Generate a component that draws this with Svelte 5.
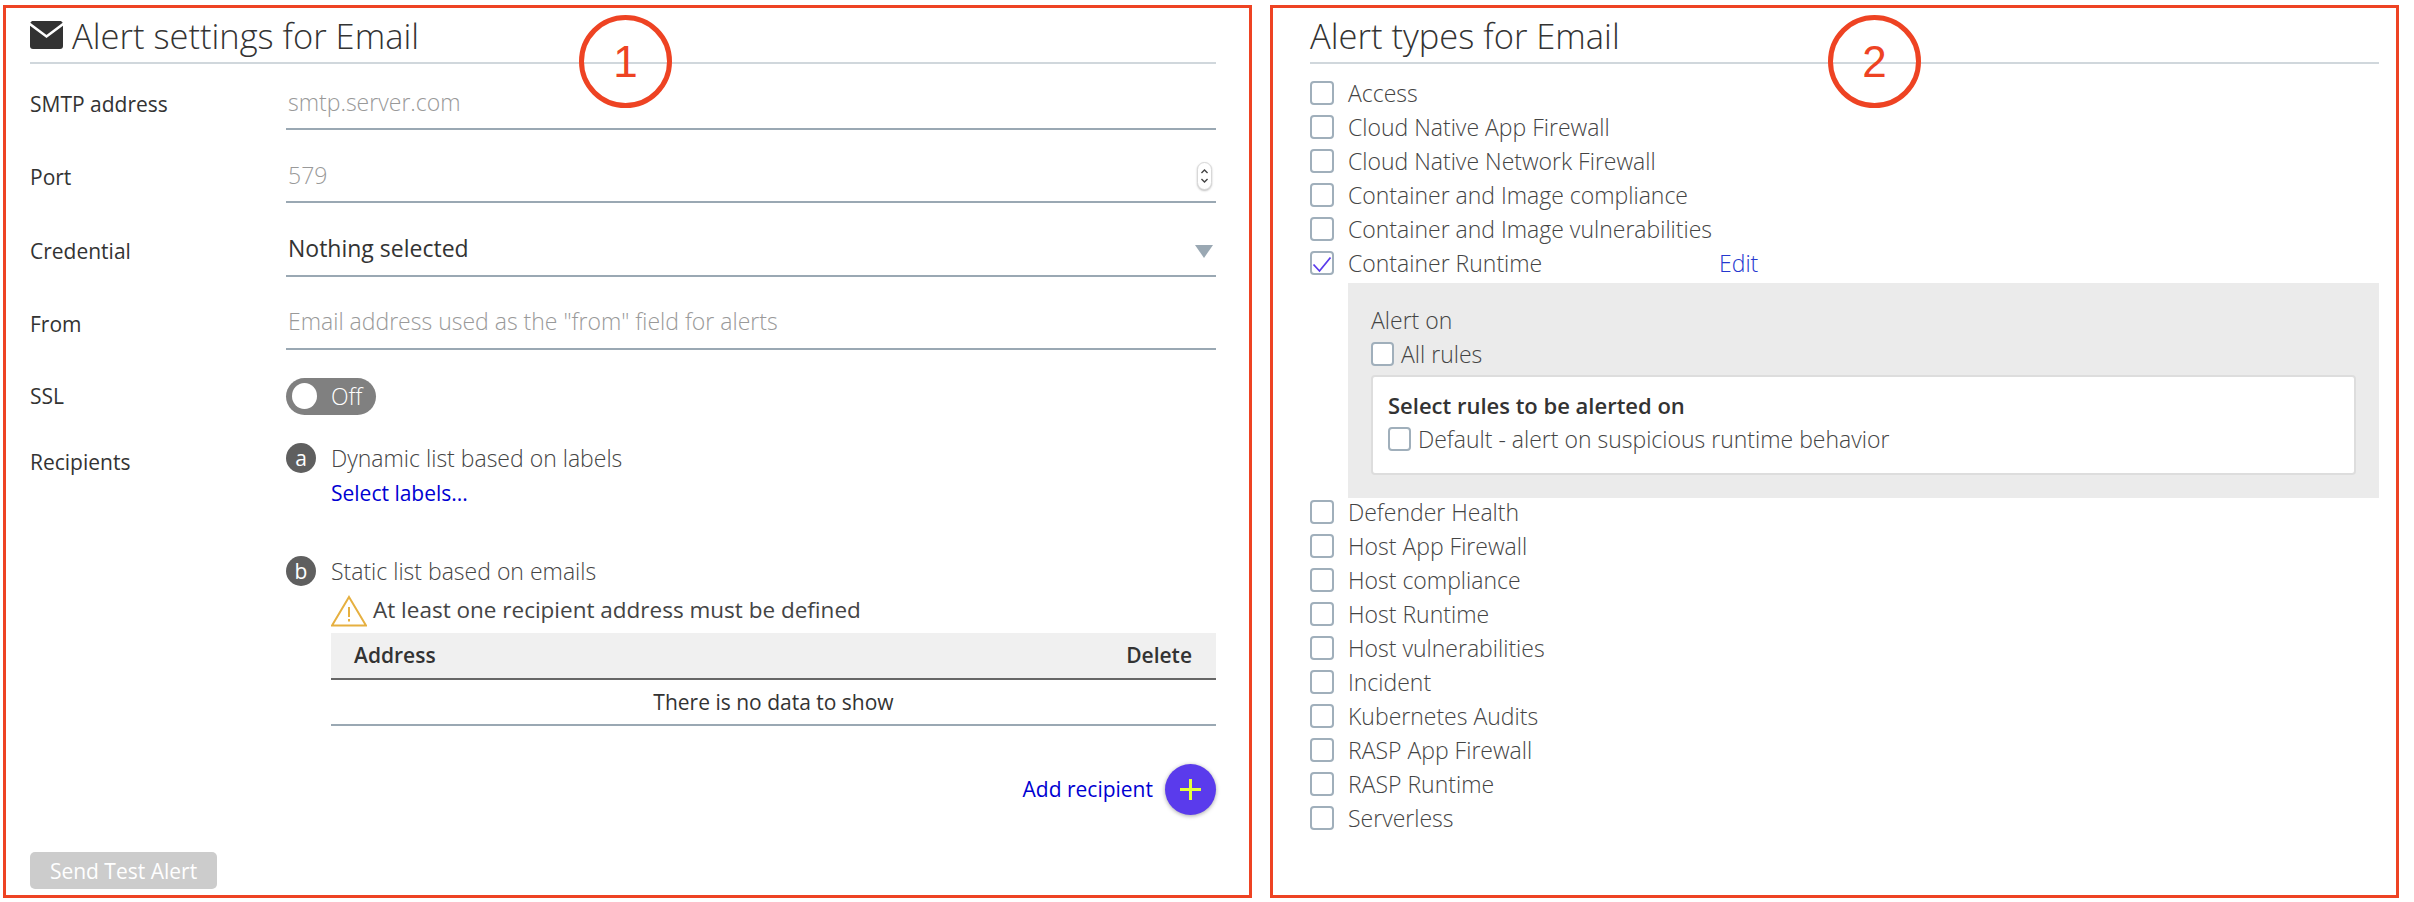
<script lang="ts">
  const typesBefore = [
    "Access",
    "Cloud Native App Firewall",
    "Cloud Native Network Firewall",
    "Container and Image compliance",
    "Container and Image vulnerabilities",
  ];
  const typesAfter = [
    "Defender Health",
    "Host App Firewall",
    "Host compliance",
    "Host Runtime",
    "Host vulnerabilities",
    "Incident",
    "Kubernetes Audits",
    "RASP App Firewall",
    "RASP Runtime",
    "Serverless",
  ];
</script>

<div class="page">
  <section class="panel left">
    <span class="callout one">1</span>
    <h2 class="title">
      <svg class="mail" viewBox="0 0 33 28" aria-hidden="true">
        <path d="M2 0h29l2 2v23a3 3 0 0 1-3 3H3a3 3 0 0 1-3-3V2z" fill="#333" />
        <path d="M-1 2.500 16.500 15.500 34 2.500" fill="none" stroke="#fff" stroke-width="2.600" />
      </svg>
      Alert settings for Email
    </h2>

    <div class="field">
      <span class="label">SMTP address</span>
      <div class="control"><span class="hint">smtp.server.com</span></div>
    </div>
    <div class="field">
      <span class="label">Port</span>
      <div class="control">
        <span class="hint">579</span>
        <span class="stepper">
          <svg viewBox="0 0 15 28" aria-hidden="true">
            <path d="M4 10.500l3.500-3.500 3.500 3.500M4 17.500l3.500 3.500 3.500-3.500" fill="none" stroke="#444" stroke-width="1.600" />
          </svg>
        </span>
      </div>
    </div>
    <div class="field">
      <span class="label">Credential</span>
      <div class="control">
        <span class="value">Nothing selected</span>
        <span class="caret"></span>
      </div>
    </div>
    <div class="field">
      <span class="label">From</span>
      <div class="control"><span class="hint">Email address used as the "from" field for alerts</span></div>
    </div>
    <div class="field ssl">
      <span class="label">SSL</span>
      <span class="toggle"><span class="knob"></span>Off</span>
    </div>

    <div class="recipients">
      <span class="label">Recipients</span>
      <div class="lists">
        <div class="list-head"><span class="badge">a</span>Dynamic list based on labels</div>
        <a class="link select" href="#labels">Select labels...</a>

        <div class="list-head static"><span class="badge">b</span>Static list based on emails</div>
        <div class="warning">
          <svg viewBox="0 0 36 32" aria-hidden="true">
            <path d="M18 2 35 30.500H1z" fill="none" stroke="#e6b040" stroke-width="2" />
            <path d="M18 12v10M18 24v2.500" fill="none" stroke="#e6b040" stroke-width="2" />
          </svg>
          <span class="warning-text">At least one recipient address must be defined</span>
        </div>
        <div class="table-head"><span>Address</span><span>Delete</span></div>
        <div class="table-empty">There is no data to show</div>
        <div class="add">
          <a class="link" href="#add">Add recipient</a>
          <button class="plus" aria-label="Add recipient">
            <svg viewBox="0 0 21 21" aria-hidden="true"><path d="M10.500 0v21M0 10.500h21" stroke="#e4ff3a" stroke-width="3" /></svg>
          </button>
        </div>
      </div>
    </div>

    <button class="send">Send Test Alert</button>
  </section>

  <section class="panel right">
    <span class="callout two">2</span>
    <h2 class="title">Alert types for Email</h2>
    <div class="types">
      {#each typesBefore as t}
        <div class="type"><span class="box"></span>{t}</div>
      {/each}
      <div class="type">
        <span class="box">
          <svg viewBox="0 0 20 20" aria-hidden="true"><path d="M1.500 11.500 7.500 18 18.500 4.500" fill="none" stroke="#5a3bec" stroke-width="1.800" /></svg>
        </span>
        <span class="type-name">Container Runtime</span>
        <a class="edit" href="#edit">Edit</a>
      </div>
      <div class="expanded">
        <div class="alert-on">Alert on</div>
        <div class="check"><span class="box small"></span>All rules</div>
        <div class="rules">
          <div class="rules-title">Select rules to be alerted on</div>
          <div class="check"><span class="box small"></span>Default - alert on suspicious runtime behavior</div>
        </div>
      </div>
      {#each typesAfter as t}
        <div class="type"><span class="box"></span>{t}</div>
      {/each}
    </div>
  </section>
</div>

<style>
  :global(body) {
    margin: 0;
    background: #fff;
  }

  .page {
    display: flex;
    gap: 18px;
    width: 2414px;
    height: 902px;
    padding: 5px 0 0 3px;
    box-sizing: border-box;
    font-family: "Open Sans", "Liberation Sans", sans-serif;
    font-size: 23px;
    font-weight: 300;
    color: #444;
  }

  .panel {
    position: relative;
    height: 893px;
    box-sizing: border-box;
    border: 3px solid #ee4323;
  }

  .panel.left {
    width: 1249px;
    padding: 0 33px 0 24px;
  }

  .panel.right {
    width: 1129px;
    padding: 0 17px 0 37px;
  }

  .callout {
    position: absolute;
    top: 7px;
    width: 93px;
    height: 93px;
    box-sizing: border-box;
    border: 5px solid #ee4323;
    border-radius: 50%;
    display: flex;
    align-items: center;
    justify-content: center;
    font-family: "Liberation Sans", sans-serif;
    font-size: 44px;
    font-weight: 400;
    color: #ee4323;
  }

  .callout.one { left: 573px; }
  .callout.two { left: 555px; }

  .title {
    display: flex;
    align-items: center;
    gap: 9px;
    height: 40px;
    margin: 7px 0 0;
    padding-bottom: 7px;
    border-bottom: 2px solid #d0d7dc;
    font-size: 34.500px;
    font-weight: 300;
    color: #333;
    box-sizing: content-box;
  }

  .mail {
    width: 33px;
    height: 28px;
    flex: none;
  }

  .field {
    display: flex;
    align-items: flex-end;
    height: 73.330px;
  }

  .field:nth-of-type(1) { height: 66px; }

  .label {
    width: 256px;
    flex: none;
    font-weight: 400;
    font-size: 21px;
    color: #333;
  }

  .field .label {
    padding-bottom: 12px;
  }

  .control {
    flex: 1;
    display: flex;
    align-items: center;
    justify-content: space-between;
    height: 44px;
    padding: 0 4px 11px 2px;
    border-bottom: 2px solid #9aa8b3;
    box-sizing: border-box;
  }

  .hint {
    color: #999;
  }

  .value {
    font-weight: 400;
    color: #333;
  }

  .stepper {
    width: 15px;
    height: 28px;
    border-radius: 8px;
    border: 1px solid #d8d8d8;
    box-sizing: border-box;
    box-shadow: 0 1px 2px rgba(0, 0, 0, 0.25);
    background: #fff;
    display: flex;
    margin-top: 2px;
  }

  .stepper svg {
    width: 100%;
    height: 100%;
  }

  .caret {
    width: 0;
    height: 0;
    border-left: 9px solid transparent;
    border-right: 9px solid transparent;
    border-top: 13px solid #9aa8b3;
    margin-right: -1px;
    margin-top: 7px;
  }

  .field.ssl {
    height: 65px;
  }

  .field.ssl .label {
    padding-bottom: 5px;
  }

  .toggle {
    display: flex;
    align-items: center;
    gap: 14px;
    width: 90px;
    height: 37px;
    padding-left: 6px;
    box-sizing: border-box;
    border-radius: 19px;
    background: #808080;
    color: #fff;
  }

  .knob {
    width: 25px;
    height: 26px;
    border-radius: 50%;
    background: #fff;
  }

  .recipients {
    display: flex;
    margin-top: 28px;
  }

  .recipients .label {
    padding-top: 5px;
  }

  .lists {
    flex: 1;
  }

  .list-head {
    display: flex;
    align-items: center;
    gap: 15px;
    height: 30px;
  }

  .list-head.static {
    margin-top: 50px;
  }

  .badge {
    width: 30px;
    height: 30px;
    border-radius: 50%;
    background: #5f5f5f;
    color: #fff;
    font-size: 21px;
    font-weight: 400;
    display: flex;
    align-items: center;
    justify-content: center;
    flex: none;
  }

  .link {
    color: #0000d2;
    font-weight: 400;
    font-size: 21px;
    text-decoration: none;
  }

  .select {
    display: block;
    margin: 7px 0 0 45px;
    line-height: 26px;
  }

  .warning {
    display: flex;
    align-items: center;
    gap: 6px;
    margin: 10px 0 0 45px;
    height: 31px;
    font-weight: 400;
    font-size: 22.500px;
    color: #444;
  }

  .warning-text {
    margin-top: -3px;
  }

  .warning svg {
    width: 36px;
    height: 32px;
    flex: none;
  }

  .table-head {
    display: flex;
    justify-content: space-between;
    align-items: center;
    height: 47px;
    box-sizing: border-box;
    margin: 6px 0 0 45px;
    padding: 0 24px 0 23px;
    background: #f0f0f0;
    border-bottom: 2px solid #666;
    font-weight: 600;
    font-size: 21px;
    color: #333;
  }

  .table-empty {
    display: flex;
    align-items: center;
    justify-content: center;
    height: 46px;
    box-sizing: border-box;
    margin-left: 45px;
    border-bottom: 2px solid #9aa8b3;
    font-weight: 400;
    font-size: 21px;
    color: #333;
  }

  .add {
    display: flex;
    align-items: center;
    justify-content: flex-end;
    gap: 12px;
    margin-top: 38px;
  }

  .plus {
    width: 51px;
    height: 51px;
    padding: 0;
    border: none;
    border-radius: 50%;
    background: #5a3bec;
    box-shadow: 0 1px 4px rgba(0, 0, 0, 0.35);
    display: flex;
    align-items: center;
    justify-content: center;
  }

  .plus svg {
    width: 21px;
    height: 21px;
  }

  .send {
    position: absolute;
    left: 24px;
    bottom: 6px;
    width: 187px;
    height: 37px;
    border: none;
    border-radius: 5px;
    background: #ccc;
    color: #fff;
    font-family: inherit;
    font-size: 21px;
    font-weight: 400;
  }

  .types {
    display: flex;
    flex-direction: column;
    gap: 10px;
    padding-top: 17px;
  }

  .type {
    display: flex;
    align-items: center;
    gap: 14px;
    height: 24px;
  }

  .type-name {
    width: 357px;
  }

  .edit {
    color: #2538cf;
    text-decoration: none;
  }

  .box {
    width: 24px;
    height: 24px;
    flex: none;
    box-sizing: border-box;
    border: 2px solid #a0afbb;
    border-radius: 4px;
    background: #fff;
    display: flex;
  }

  .box svg {
    width: 100%;
    height: 100%;
  }

  .box.small {
    width: 23px;
  }

  .expanded {
    height: 215px;
    box-sizing: border-box;
    margin: -2px 0 -8px 38px;
    padding: 22px 23px 0 23px;
    background: #ebebeb;
  }

  .alert-on {
    line-height: 30px;
    margin-bottom: 7px;
  }

  .check {
    display: flex;
    align-items: center;
    gap: 7px;
    height: 24px;
  }

  .rules {
    height: 100px;
    box-sizing: border-box;
    margin-top: 9px;
    padding: 15px 15px 0;
    background: #fff;
    border: 2px solid #ddd;
    border-radius: 4px;
  }

  .rules-title {
    font-weight: 600;
    font-size: 22px;
    color: #333;
    line-height: 26px;
    margin-bottom: 9px;
  }
</style>
